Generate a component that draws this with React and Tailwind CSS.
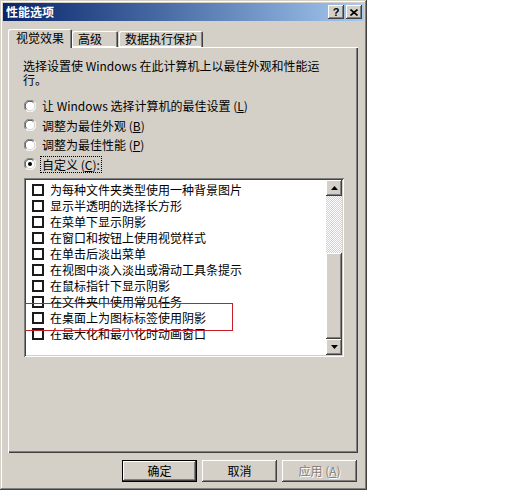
import React from "react";

const raised =
  "shadow-[inset_-1px_-1px_#404040,inset_1px_1px_#ffffff,inset_-2px_-2px_#808080,inset_2px_2px_#d4d0c8]";
const sunken =
  "shadow-[inset_1px_1px_#808080,inset_-1px_-1px_#ffffff,inset_2px_2px_#404040,inset_-2px_-2px_#d4d0c8]";

const items = [
  "为每种文件夹类型使用一种背景图片",
  "显示半透明的选择长方形",
  "在菜单下显示阴影",
  "在窗口和按钮上使用视觉样式",
  "在单击后淡出菜单",
  "在视图中淡入淡出或滑动工具条提示",
  "在鼠标指针下显示阴影",
  "在文件夹中使用常见任务",
  "在桌面上为图标标签使用阴影",
  "在最大化和最小化时动画窗口",
];

function Radio({ checked }) {
  return (
    <svg width="12" height="12" viewBox="0 0 12 12" className="shrink-0">
      <circle cx="6" cy="6" r="5.5" fill="#ffffff" />
      <path d="M10.2 1.8A5.5 5.5 0 0 0 1.8 10.2" fill="none" stroke="#808080" strokeWidth="1" />
      <path d="M9.4 2.6A4.5 4.5 0 0 0 2.6 9.4" fill="none" stroke="#404040" strokeWidth="1" />
      <path d="M1.8 10.2A5.5 5.5 0 0 0 10.2 1.8" fill="none" stroke="#ffffff" strokeWidth="1" />
      <path d="M2.6 9.4A4.5 4.5 0 0 0 9.4 2.6" fill="none" stroke="#d4d0c8" strokeWidth="1" />
      {checked && <circle cx="6" cy="6" r="2" fill="#000000" />}
    </svg>
  );
}

function RadioRow({ checked, children, focus }) {
  return (
    <div className="h-[19.5px] flex items-center ml-[1px]">
      <Radio checked={checked} />
      <span
        className={
          "ml-[6px] leading-[13px] " +
          (focus ? "outline outline-1 outline-dotted outline-black outline-offset-[1px]" : "")
        }
      >
        {children}
      </span>
    </div>
  );
}

function Arrow({ up }) {
  return (
    <div className={"w-[16px] h-[16px] bg-[#d4d0c8] flex items-center justify-center " + raised}>
      <svg width="7" height="4" viewBox="0 0 7 4">
        <path d={up ? "M3.5 0L7 4H0Z" : "M0 0H7L3.5 4Z"} fill="#000000" />
      </svg>
    </div>
  );
}

function Button({ children, def, disabled }) {
  return (
    <div
      className={
        "w-[75px] h-[22px] bg-[#d4d0c8] flex items-center justify-center " +
        (def
          ? "shadow-[inset_0_0_0_1px_#000000,inset_-2px_-2px_#404040,inset_2px_2px_#ffffff,inset_-3px_-3px_#808080]"
          : raised) +
        (disabled ? " text-[#808080] [text-shadow:1px_1px_#ffffff]" : " text-black")
      }
    >
      {children}
    </div>
  );
}

export default function App() {
  return (
    <div className="relative w-[512px] h-[490px] bg-white font-['Noto_Sans_CJK_SC',sans-serif] text-[12px] text-black flex">
      <div
        className={
          "w-[367px] h-[490px] bg-[#d4d0c8] p-[3px] flex flex-col shadow-[inset_-1px_-1px_#404040,inset_1px_1px_#d4d0c8,inset_-2px_-2px_#808080,inset_2px_2px_#ffffff]"
        }
      >
        {/* title bar */}
        <div className="h-[18px] bg-gradient-to-r from-[#0a246a] to-[#a6caf0] flex items-center pl-[3px] pr-[2px]">
          <span className="text-white font-bold leading-none">性能选项</span>
          <div className="ml-auto flex gap-[2px]">
            <div className={"w-[16px] h-[14px] bg-[#d4d0c8] flex items-center justify-center " + raised}>
              <span className="font-['Liberation_Sans',sans-serif] font-bold text-[11px] leading-none">?</span>
            </div>
            <div className={"w-[16px] h-[14px] bg-[#d4d0c8] flex items-center justify-center " + raised}>
              <svg width="8" height="7" viewBox="0 0 8 7">
                <path d="M0.5 0.5L7.5 6.5M7.5 0.5L0.5 6.5" stroke="#000000" strokeWidth="1.6" />
              </svg>
            </div>
          </div>
        </div>

        {/* tabs */}
        <div className="mx-[5px] mt-[8px] flex items-end h-[18px]">
          <div className="relative z-10 w-[64px] h-[19px] -mb-[1px] bg-[#d4d0c8] rounded-t-[2px] flex items-center justify-center pb-[2px] shadow-[inset_1px_1px_#ffffff,inset_-1px_0_#404040,inset_-2px_0_#808080]">
            视觉效果
          </div>
          <div className="w-[46px] h-[16px] bg-[#d4d0c8] rounded-t-[2px] flex items-center pl-[6px] shadow-[inset_1px_1px_#ffffff,inset_-1px_0_#404040,inset_-2px_0_#808080,inset_0_-1px_#ffffff]">
            高级
          </div>
          <div className="ml-[1px] w-[84px] h-[16px] bg-[#d4d0c8] rounded-t-[2px] flex items-center justify-center shadow-[inset_1px_1px_#ffffff,inset_-1px_0_#404040,inset_-2px_0_#808080,inset_0_-1px_#ffffff]">
            数据执行保护
          </div>
        </div>

        {/* panel */}
        <div className="mx-[5px] mr-[6px] h-[406px] pl-[15px] pt-[12px] flex flex-col shadow-[inset_1px_1px_#ffffff,inset_-1px_-1px_#404040,inset_-2px_-2px_#808080]">
          <div className="flex flex-col gap-[1px]">
            <div className="h-[13px] leading-[13px]">选择设置使 Windows 在此计算机上以最佳外观和性能运</div>
            <div className="h-[13px] leading-[13px]">行。</div>
          </div>
          <div className="mt-[10px] flex flex-col">
            <RadioRow>
              让 Windows 选择计算机的最佳设置 (<u>L</u>)
            </RadioRow>
            <RadioRow>
              调整为最佳外观 (<u>B</u>)
            </RadioRow>
            <RadioRow>
              调整为最佳性能 (<u>P</u>)
            </RadioRow>
            <RadioRow checked focus>
              自定义 (<u>C</u>):
            </RadioRow>
          </div>

          {/* list box */}
          <div className={"mt-[4px] ml-[1px] w-[320px] h-[179px] bg-white p-[2px] flex " + sunken}>
            <div className="flex-1 pt-[2px] flex flex-col">
              {items.map((t) => (
                <div key={t} className="h-[16px] flex items-center pl-[6px]">
                  <div className="w-[12px] h-[12px] border-2 border-[#1a1a1a] bg-white shrink-0" />
                  <span className="ml-[6px] leading-none">{t}</span>
                </div>
              ))}
            </div>
            <div className="w-[16px] flex flex-col">
              <Arrow up />
              <div className="flex-1 flex flex-col justify-end bg-[repeating-conic-gradient(#d4d0c8_0_25%,#ffffff_0_50%)] bg-[length:2px_2px]">
                <div className={"h-[86px] bg-[#d4d0c8] " + raised} />
              </div>
              <Arrow />
            </div>
          </div>
        </div>

        {/* buttons */}
        <div className="mt-[7px] pr-[7px] flex justify-end gap-[5px]">
          <Button def>确定</Button>
          <Button>取消</Button>
          <Button disabled>
            应用 (<u>A</u>)
          </Button>
        </div>
      </div>

      {/* annotation */}
      <div className="absolute left-[25px] top-[303px] w-[208px] h-[28px] border border-[#c81e2a]" />
    </div>
  );
}
